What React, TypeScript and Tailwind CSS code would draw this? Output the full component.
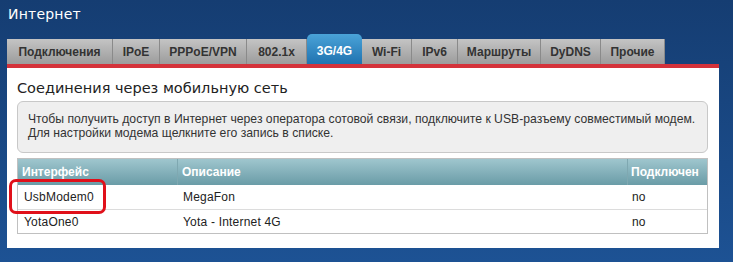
import React from "react";

const tabs = [
  { label: "Подключения", w: "w-[106px]" },
  { label: "IPoE", w: "w-[47px]" },
  { label: "PPPoE/VPN", w: "w-[87px]" },
  { label: "802.1x", w: "w-[60px]" },
  { label: "3G/4G", w: "w-[55px]", active: true },
  { label: "Wi-Fi", w: "w-[50px]" },
  { label: "IPv6", w: "w-[46px]" },
  { label: "Маршруты", w: "w-[83px]" },
  { label: "DyDNS", w: "w-[60px]" },
  { label: "Прочие", w: "w-[64px]" },
];

const rows = [
  { iface: "UsbModem0", desc: "MegaFon", conn: "no", marked: true },
  { iface: "YotaOne0", desc: "Yota - Internet 4G", conn: "no" },
];

export default function App() {
  return (
    <div className="w-[733px] h-[262px] overflow-hidden bg-gradient-to-b from-[#153d72] to-[#1d5294] font-['Liberation_Sans',Arial,sans-serif]">
      <div className="pl-[8px] pt-[4px] h-[33px] text-white text-[14px] font-['DejaVu_Sans',sans-serif] tracking-[0.2px]">
        Интернет
      </div>

      <div className="pl-[7px] flex items-end h-[31px]">
        {tabs.map((t) =>
          t.active ? (
            <div
              key={t.label}
              className={`${t.w} h-[30px] rounded-t-[5px] bg-gradient-to-b from-[#4aa3d8] to-[#1f73b0] text-white font-bold text-[12px] flex items-center justify-center pt-[4px]`}
            >
              {t.label}
            </div>
          ) : (
            <div
              key={t.label}
              className={`${t.w} h-[25px] bg-gradient-to-b from-[#c4c4c4] to-[#9c9c9c] border-r border-[#8a8a8a] text-[#333] font-bold text-[12px] flex items-center justify-center`}
            >
              {t.label}
            </div>
          )
        )}
      </div>

      <div className="ml-[7px] w-[712px] h-[4px] bg-[#d4323a]" />

      <div className="ml-[7px] w-[712px] h-[180px] bg-white px-[10px] pt-[10px]">
        <div className="text-[14.5px] text-[#222] font-['DejaVu_Sans',sans-serif] leading-[20px]">
          Соединения через мобильную сеть
        </div>

        <div className="mt-[3px] w-[691px] h-[52px] rounded-[6px] border border-[#c8c8c8] bg-[#efefef] px-[10px] pt-[10px] text-[12.2px] leading-[14px] text-[#333] whitespace-nowrap">
          <div>Чтобы получить доступ в Интернет через оператора сотовой связи, подключите к USB-разъему совместимый модем.</div>
          <div>Для настройки модема щелкните его запись в списке.</div>
        </div>

        <div className="mt-[5px] w-[691px] border border-[#c0c0c0]">
          <div className="flex h-[26px] bg-gradient-to-b from-[#9fc6ce] to-[#6a9ca7] text-white font-bold text-[12px]">
            <div className="w-[160px] px-[4px] flex items-center border-r border-[#7fa8b1]">Интерфейс</div>
            <div className="w-[450px] px-[4px] flex items-center border-r border-[#7fa8b1]">Описание</div>
            <div className="flex-1 px-[3px] flex items-center">Подключен</div>
          </div>
          {rows.map((r, i) => (
            <div
              key={r.iface}
              className={`flex h-[24px] text-[12px] text-[#222] tracking-[0.2px] ${i > 0 ? "border-t border-[#dcdcdc]" : ""}`}
            >
              <div className="w-[160px] px-[6px] flex items-center relative">
                {r.iface}
                {r.marked && (
                  <div className="absolute left-[-9px] top-[-6px] w-[97px] h-[35px] rounded-[7px] border-[3px] border-[#e0101a]" />
                )}
              </div>
              <div className="w-[450px] px-[5px] flex items-center">{r.desc}</div>
              <div className="flex-1 px-[4px] flex items-center">{r.conn}</div>
            </div>
          ))}
        </div>
      </div>
    </div>
  );
}
